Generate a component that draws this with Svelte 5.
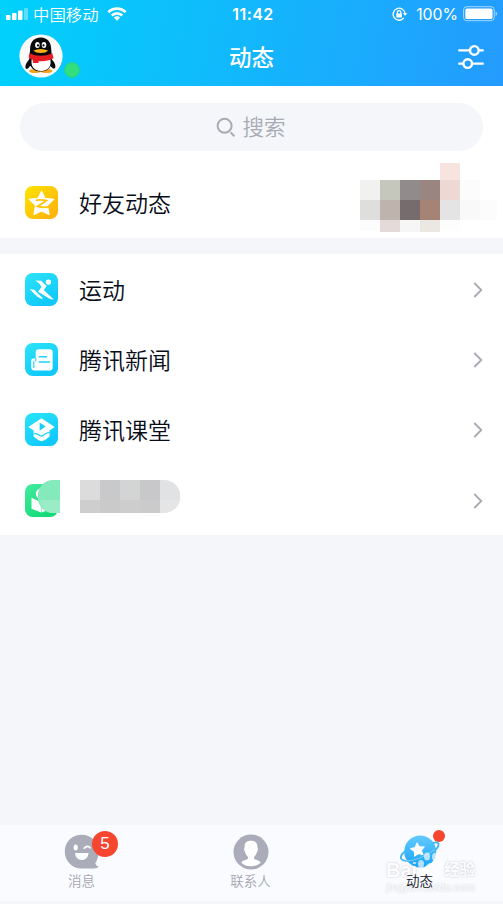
<script lang="ts">
	type Cell = [number, number, number, number, string];

	const apps = [
		{ id: 'sport', label: '运动' },
		{ id: 'news', label: '腾讯新闻' },
		{ id: 'class', label: '腾讯课堂' },
		{ id: 'book', label: '' }
	];

	// x, y, width, height, colour
	const feedMosaic: Cell[] = [
		[80, 0, 20, 17, '#f8e4de'],
		[0, 17, 20, 20, '#f1f1ef'],
		[20, 17, 20, 20, '#c5c7bc'],
		[40, 17, 20, 20, '#918b8b'],
		[60, 17, 20, 20, '#9a8580'],
		[80, 17, 20, 20, '#eed8d3'],
		[100, 17, 20, 20, '#fcfcfc'],
		[0, 37, 20, 20, '#dededc'],
		[20, 37, 20, 20, '#beb3ad'],
		[40, 37, 20, 20, '#776c6d'],
		[60, 37, 20, 20, '#a58476'],
		[80, 37, 20, 20, '#e4e4e4'],
		[100, 37, 20, 20, '#f9f9f9'],
		[120, 37, 17, 20, '#fcfcfc'],
		[0, 57, 20, 11, '#fcfcfc'],
		[20, 57, 20, 12, '#e3dad9'],
		[40, 57, 20, 12, '#f6f6f6'],
		[60, 57, 20, 12, '#ebe7e3'],
		[80, 57, 20, 11, '#fdfdfd']
	];

	const nameMosaic: Cell[] = [
		[0, 0, 20, 20, '#dcdcdd'],
		[20, 0, 20, 20, '#c9c9cb'],
		[40, 0, 20, 20, '#d3d4d4'],
		[60, 0, 20, 20, '#c8c8ca'],
		[80, 0, 20, 20, '#e1e2e4'],
		[0, 20, 20, 13, '#cecece'],
		[20, 20, 20, 13, '#cacaca'],
		[40, 20, 20, 13, '#cdcdcd'],
		[60, 20, 20, 13, '#cbcbcc'],
		[80, 20, 20, 13, '#e5e5e5']
	];
</script>

<div class="screen">
	<header>
		<div class="status">
			<div class="left">
				<svg width="22" height="14" viewBox="0 0 22 14" fill="#fff">
					<rect x="0" y="8" width="4.5" height="5" rx="1" />
					<rect x="6" y="6" width="4.5" height="7" rx="1" />
					<rect x="12" y="3.5" width="4.5" height="9.5" rx="1" />
					<rect x="18" y="1" width="4" height="12" rx="1" opacity=".35" />
				</svg>
				<span class="carrier">中国移动</span>
				<svg width="20" height="14" viewBox="0 0 20 14" fill="none" stroke="#fff" stroke-width="2.8">
					<path d="M1.4 5.2a12.2 12.2 0 0 1 17.2 0" />
					<path d="M4.8 8.6a7.4 7.4 0 0 1 10.4 0" />
					<path d="M10 13.7 6.9 10.6a4.4 4.4 0 0 1 6.2 0z" fill="#fff" stroke="none" />
				</svg>
			</div>
			<span class="time">11:42</span>
			<div class="right">
				<svg width="16" height="15" viewBox="0 0 16 15" fill="none" stroke="#fff" stroke-width="1.3">
					<path d="M13.1 6.8A6 6 0 1 0 11.8 11" />
					<path d="m10.8 6.2 2.3 2.6 2.3-2.6z" fill="#fff" stroke="none" />
					<rect x="4.3" y="6.5" width="5.6" height="4" fill="#fff" stroke="none" />
					<path d="M5.4 7V5.4a1.7 1.7 0 0 1 3.4 0V7" />
				</svg>
				<span class="percent">100%</span>
				<svg width="35" height="16" viewBox="0 0 35 16">
					<rect x=".6" y=".7" width="30.6" height="14" rx="3.2" fill="none" stroke="#fff" stroke-opacity=".6" />
					<rect x="2.3" y="2.4" width="27.2" height="10.6" rx="1.6" fill="#fff" />
					<path d="M32.6 5.2q3 2.5 0 5z" fill="#fff" opacity=".6" />
				</svg>
			</div>
		</div>
		<div class="nav">
			<div class="profile">
				<svg width="44" height="44" viewBox="0 0 44 44">
					<circle cx="22" cy="22" r="21.6" fill="#fbfafa" />
					<path d="M11.5 24C7.5 28 5.5 32 6.8 34.5 8 36 10 33.5 11 32h20.5c1.5 2 3.5 3.5 4.6 2 1.2-2.5-1-7-5-10z" fill="#090a0d" />
					<ellipse cx="16" cy="37" rx="6" ry="2" fill="#f7a31b" />
					<ellipse cx="27.5" cy="37" rx="6" ry="2" fill="#f7a31b" />
					<path d="M21.7 3.5c-7 0-10.6 5-10.6 11.5l-.8 11c0 7 4.5 11.5 11.4 11.5S33 33 33 26l-.8-11c0-6.5-3.5-11.5-10.5-11.5z" fill="#090a0d" />
					<path d="M13 24h18c2.3 8-2 13-9 13s-11-5-9-13z" fill="#fff" />
					<path d="M10.3 19.2q11.5 5 23 0l1.2 5q-6 3.5-15 3v1.8h-5.3l-.7-3.5-3.8-1.4z" fill="#e71c20" />
					<ellipse cx="18.4" cy="11" rx="2.3" ry="2.9" fill="#fff" />
					<ellipse cx="25" cy="11" rx="2.3" ry="2.9" fill="#fff" />
					<circle cx="19" cy="11.4" r="1.1" />
					<circle cx="24.5" cy="11.4" r="1.1" />
					<path d="M14.4 16.6q7.3-3 14.7 0-2 2.5-7.3 2.5t-7.4-2.5z" fill="#fbae16" />
				</svg>
				<i class="online"></i>
			</div>
			<h1>动态</h1>
			<svg class="settings" width="26" height="26" viewBox="0 0 26 26" fill="none" stroke="#fff" stroke-width="2.4">
				<path d="M.3 6.4h11.5M21 6.4h4.7M.3 19.6h4.9M14.2 19.6h11.5" />
				<circle cx="16.3" cy="6.4" r="4.3" />
				<circle cx="9.7" cy="19.6" r="4.3" />
			</svg>
		</div>
	</header>

	<section class="top">
		<div class="search">
			<svg width="20" height="20" viewBox="0 0 20 20" fill="none" stroke="#a9abb4" stroke-width="2">
				<circle cx="8.6" cy="8.8" r="7" />
				<path d="m14.6 15.4 3.8 3.8" />
			</svg>
			<span>搜索</span>
		</div>
		<div class="row feed">
			<svg class="icon" viewBox="0 0 32 32">
				<defs>
					<linearGradient id="gold" x1="0" y1="0" x2="1" y2="1">
						<stop offset="0" stop-color="#ffe400" />
						<stop offset="1" stop-color="#ffad0d" />
					</linearGradient>
				</defs>
				<rect width="32" height="32" rx="7.5" fill="url(#gold)" />
				<path d="m16 5 3.4 6.9 8.6.9-6.2 6 1.6 8.9-7.4-3.4-7.4 3.4 1.6-8.9-6.2-6 8.6-.9z" fill="#fff" stroke="#fff" stroke-linejoin="round" />
				<path d="M10.5 14q5-1 10.2.2l-8.6 5.6q5.5 1.5 11 .3" fill="none" stroke="#ffc507" stroke-width="1.7" />
			</svg>
			<span class="label">好友动态</span>
			<svg class="mosaic" width="137" height="69">
				{#each feedMosaic as [x, y, w, h, fill]}
					<rect {x} {y} width={w} height={h} {fill} />
				{/each}
			</svg>
		</div>
	</section>

	<section class="apps">
		{#each apps as app}
			<div class="row">
				<svg class="icon" viewBox="0 0 32 32">
					<defs>
						<linearGradient id="bg-{app.id}" x1="0" y1="0" x2=".6" y2="1">
							<stop offset="0" stop-color={app.id === 'book' ? '#43eba0' : '#2be4f7'} />
							<stop offset="1" stop-color={app.id === 'book' ? '#13da78' : '#10c8fa'} />
						</linearGradient>
					</defs>
					<rect width="32" height="32" rx="7.5" fill="url(#bg-{app.id})" />
					{#if app.id === 'sport'}
						<circle cx="22.7" cy="8.8" r="2.6" fill="#fff" />
						<path d="M10 7.2 15.6 7.4 21 12.6 18.2 16.6 28 25.6 24.2 25.2 12.8 18.2 16 13.4 14 10.4z" fill="#fff" />
						<path d="M4.4 15.6 9 16.2 12.2 19.6 17 24 16.8 25.4 12 23 8.4 19.6z" fill="#fff" />
					{:else if app.id === 'news'}
						<path d="M13 6h11.2a2.6 2.6 0 0 1 2.6 2.6v15.2a2.8 2.8 0 0 1-2.8 2.8H9a3 3 0 0 1-3-3V17q0-2 2-2h2.4V8.6A2.6 2.6 0 0 1 13 6z" fill="#fff" />
						<path d="M13.3 13.4h8.2M13.3 18.4h10.8" fill="none" stroke="#1cd4f8" stroke-width="1.5" />
						<path d="M8.6 17.2v7M10.4 15v2.4" fill="none" stroke="#1cd4f8" stroke-width="1.1" />
					{:else if app.id === 'class'}
						<path d="m16 5 12.8 8.6L16.5 22 3.2 13.6z" fill="#fff" />
						<path d="M8.3 17.2q4 .8 6.7 3.3 1.3.8 3-.4 3-2.5 5.8-3v5.8Q20 26.5 16 27.5q-4-1-7.7-4.6z" fill="#fff" />
						<path d="M8.5 19.7q4 .2 6.2 2.3 1.6.8 3.3-.7 2.6-2.2 5.8-2.6" fill="none" stroke="#18d1f8" stroke-width="1.2" />
						<path d="m14.2 9.2 5.8 4-5.8 4.1z" fill="#18d1f8" />
					{:else}
						<circle cx="16" cy="9.5" r="5.5" fill="#fff" />
						<path d="m6.3 13.4 9.5 4.2v10L6.3 24zM25.7 13.4l-9.5 4.2v10l9.5-3.6z" fill="#fff" />
					{/if}
				</svg>
				{#if app.label}
					<span class="label">{app.label}</span>
				{:else}
					<svg class="smudge" width="22" height="33">
						<path d="M15 0h7v33H15A15 16 0 0 1 15 0z" fill="#85eabb" />
						<path d="M1.6 20H22v13H15A15 16 0 0 1 1.6 20z" fill="#9bebc6" />
					</svg>
					<svg class="name-mosaic" width="101" height="33">
						<clipPath id="pill">
							<path d="M0 0h84a16.5 16.5 0 0 1 0 33H0z" />
						</clipPath>
						<g clip-path="url(#pill)">
							{#each nameMosaic as [x, y, w, h, fill]}
								<rect {x} {y} width={w} height={h} {fill} />
							{/each}
						</g>
					</svg>
				{/if}
				<svg class="chevron" width="10" height="16" viewBox="0 0 10 16" fill="none" stroke="#a9aab1" stroke-width="1.8">
					<path d="m1.3 1 7 7-7 7" />
				</svg>
			</div>
		{/each}
	</section>

	<footer>
		<div class="tab">
			<svg width="36" height="36" viewBox="0 0 36 36">
				<path d="M17.5.8C8 .8.8 8 .8 17.4S8 34.6 17.5 34.6h12q4-.2 5.5-2.2-3-.5-3.8-3Q34.6 24 34.6 17.5C34.6 8 27 .8 17.5.8z" fill="#abacba" />
				<ellipse cx="11.7" cy="13.4" rx="2.1" ry="2.9" fill="#fff" />
				<path d="M20.3 14.2q3.5-3.5 5.7-.5" fill="none" stroke="#fff" stroke-width="1.8" stroke-linecap="round" />
				<path d="M11 19h13.6q-.7 7-6.8 7T11 19z" fill="#fff" />
			</svg>
			<span>消息</span>
			<b class="badge">5</b>
		</div>
		<div class="tab">
			<svg width="36" height="36" viewBox="0 0 36 36">
				<circle cx="18" cy="18" r="17.5" fill="#abacba" />
				<path d="M18 6.8c-4.6 0-6.8 2.5-6.4 6.8l-.6 1.9 1.1 3.1q1 3 2.8 4.2v1.8c-.6 1.5-5.3 1.6-6.6 4.1Q12 32.2 18 32.2t9.7-3.5c-1.3-2.5-6-2.6-6.6-4.1v-1.8q1.8-1.2 2.8-4.2l1.1-3.1-.6-1.9c.4-4.3-1.8-6.8-6.4-6.8z" fill="#fff" />
			</svg>
			<span>联系人</span>
		</div>
		<div class="tab active">
			<svg width="40" height="36" viewBox="0 0 40 36">
				<defs>
					<linearGradient id="planet" x1="0" y1="0" x2="0" y2="1">
						<stop offset="0" stop-color="#64caff" />
						<stop offset="1" stop-color="#17a5f5" />
					</linearGradient>
				</defs>
				<circle cx="20.2" cy="17.5" r="16" fill="url(#planet)" />
				<path d="M4.8 17.5C1.5 20 .3 23 1.4 25q2 2.5 8.5 2.1M32.5 9q4.5-1.3 5.8.4 1.5 4.4-7.5 9.8" fill="none" stroke="#3cb5f4" stroke-width="1.8" />
				<path d="M5.5 26.8Q18 27.5 35 15.5" fill="none" stroke="#fff" stroke-opacity=".35" stroke-width="1" />
				<path d="m17 9.1 2.5 4 4.6-.3-2.9 3.7 1.8 4.3-4.5-1.4-3.9 2.7.1-4.7-3.9-2.7 4.5-1.2z" fill="#fff" stroke="#fff" stroke-width="1.2" stroke-linejoin="round" />
			</svg>
			<span class="name">动态</span>
			<i class="dot"></i>
			<div class="watermark">
				<div class="brand">
					<span>Bai</span>
					<svg width="27" height="29" viewBox="0 0 27 29" fill="#fff">
						<ellipse cx="4" cy="12" rx="3" ry="4" />
						<ellipse cx="10" cy="4.5" rx="3" ry="4" />
						<ellipse cx="18" cy="5" rx="3" ry="4" />
						<ellipse cx="23.5" cy="13" rx="3" ry="4" />
						<path d="M13.5 11c-4 0-4.5 4-7 6.5-3 2.6-3 9 2 9.5 3 .4 7-.4 10 0 5 .2 6-6.5 2.5-9.5-3-2.5-3.5-6.5-7.5-6.5z" />
					</svg>
					<span class="cn">经验</span>
				</div>
				<div class="url">jingyan.baidu.com</div>
			</div>
		</div>
	</footer>
</div>

<style>
	:global(body) {
		background: #f4f6fa;
	}
	.screen {
		width: 503px;
		height: 904px;
		display: flex;
		flex-direction: column;
		overflow: hidden;
		background: #f4f6fa;
		color: #080b18;
		font-family: 'Noto Sans CJK SC', sans-serif;
	}
	svg {
		display: block;
		flex: none;
	}
	header {
		height: 86px;
		flex: none;
		color: #fff;
		background: linear-gradient(100deg, #00d1fb 0%, #12b8fc 48%, #249bfe 100%);
	}
	.status,
	.nav {
		display: grid;
		grid-template-columns: 1fr auto 1fr;
		align-items: center;
	}
	.status {
		height: 28px;
		padding: 0 5px 0 6px;
		font-family: Inter, sans-serif;
		font-size: 16px;
	}
	.left,
	.right {
		display: flex;
		align-items: center;
	}
	.right {
		justify-content: flex-end;
	}
	.carrier {
		margin: -1px 8px 0 5px;
		font: 16.4px/24px 'Noto Sans CJK SC', sans-serif;
		font-weight: 350;
	}
	.time {
		font-weight: 600;
		letter-spacing: 0.4px;
		padding-left: 2px;
	}
	.percent {
		margin: 0 5px 0 8px;
		font-size: 15.8px;
	}
	.nav {
		height: 58px;
		padding: 0 19px;
	}
	.profile {
		display: flex;
		align-items: flex-end;
		margin-top: -2px;
	}
	.online {
		width: 16px;
		height: 16px;
		border-radius: 50%;
		background: #31de7b;
		border: 1px solid #1fcf9c;
		box-sizing: border-box;
		margin-left: 1px;
	}
	h1 {
		margin: -3px 0 0;
		font-size: 22.5px;
		font-weight: 500;
	}
	.settings {
		justify-self: end;
	}
	section {
		background: #fff;
		flex: none;
	}
	.top {
		height: 152px;
		padding-top: 17px;
		box-sizing: border-box;
	}
	.search {
		height: 48px;
		margin: 0 20px;
		border-radius: 24px;
		background: #f4f6fa;
		display: flex;
		align-items: center;
		justify-content: center;
		gap: 6px;
		color: #a9abb4;
		font-size: 21.5px;
		font-weight: 350;
	}
	.search span {
		margin: -4px 1px 0 0;
	}
	.row {
		height: 70.3px;
		padding: 0 20px 0 25px;
		display: flex;
		align-items: center;
	}
	.feed {
		height: 87px;
		padding: 0 6px 0 25px;
		align-items: flex-start;
	}
	.feed .icon {
		margin-top: 35px;
	}
	.feed .label {
		line-height: 34px;
		margin-top: 34px;
	}
	.icon {
		width: 33px;
		height: 33px;
	}
	.label {
		margin: -1px 0 0 21px;
		font-size: 23px;
		font-weight: 350;
	}
	.mosaic {
		margin: 12px 0 0 auto;
	}
	.apps {
		margin-top: 16px;
	}
	.smudge {
		margin: -7px 0 0 -20px;
	}
	.name-mosaic {
		margin: -7px 0 0 20px;
	}
	.chevron {
		margin: 1px 0 0 auto;
	}
	footer {
		height: 76px;
		margin-top: auto;
		margin-bottom: 3px;
		display: flex;
		justify-content: space-between;
		padding: 0 42px 0 40px;
		box-sizing: border-box;
		background: #fafbff;
	}
	.tab {
		width: 83px;
		padding-top: 9px;
		box-sizing: border-box;
		display: flex;
		flex-direction: column;
		align-items: center;
		position: relative;
		color: #a5a6b2;
		font-size: 13.5px;
		font-weight: 350;
		line-height: 20px;
	}
	.tab.active {
		color: #111421;
	}
	.name {
		position: relative;
		z-index: 1;
	}
	.badge {
		position: absolute;
		left: 52px;
		top: 6px;
		width: 26px;
		height: 26px;
		border-radius: 50%;
		background: #f6462f;
		color: #fff;
		text-align: center;
		font: 17px/26px 'Liberation Sans', sans-serif;
	}
	.dot {
		position: absolute;
		left: 55px;
		top: 5px;
		width: 12px;
		height: 12px;
		border-radius: 50%;
		background: #f6462f;
	}
	.watermark {
		position: absolute;
		left: 8px;
		top: 27px;
		width: 92px;
		color: #fff;
		opacity: 0.65;
		text-shadow: 0 0 2px #a2a4aa;
	}
	.brand {
		display: flex;
		align-items: center;
		height: 29px;
		font: bold 20px/20px 'Liberation Sans', 'Noto Sans CJK SC', sans-serif;
		white-space: nowrap;
	}
	.brand span {
		padding-top: 7px;
	}
	.brand .cn {
		font-size: 15.5px;
	}
	.url {
		font: 11px/12px 'Liberation Sans', sans-serif;
		white-space: nowrap;
	}
</style>
